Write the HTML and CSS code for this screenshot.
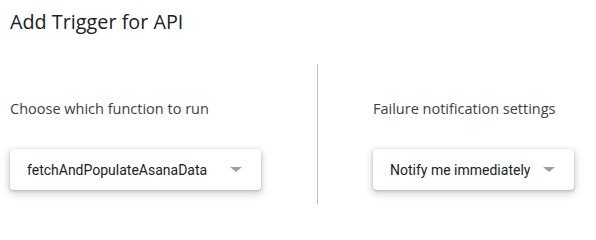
FILE: index.html
```html
<!DOCTYPE html>
<html>
<head>
<meta charset="utf-8">
<link rel="stylesheet" href="styles.css">
</head>
<body>
<div class="dialog">
  <h1 class="title">Add Trigger for API</h1>
  <div class="columns">
    <div class="col col-left">
      <div class="label">Choose which function to run</div>
      <div class="select select-fn">
        <span class="value">fetchAndPopulateAsanaData</span>
        <span class="arrow"></span>
      </div>
    </div>
    <div class="col col-right">
      <div class="label">Failure notification settings</div>
      <div class="select select-notify">
        <span class="value">Notify me immediately</span>
        <span class="arrow"></span>
      </div>
    </div>
  </div>
</div>
</body>
</html>
```
FILE: styles.css
```css
html, body {
  margin: 0;
  padding: 0;
  background: #ffffff;
}
.dialog {
  padding: 0 0 0 10px;
  font-family: "Open Sans", "Noto Sans", sans-serif;
}
.title {
  margin: 0;
  padding-top: 8px;
  font-size: 19.8px;
  line-height: 28px;
  font-weight: 400;
  color: #202124;
  height: 56px;
  box-sizing: border-box;
  height: 64px;
}
.columns {
  display: flex;
  height: 140px;
}
.col {
  display: flex;
  flex-direction: column;
  align-items: flex-start;
  padding-top: 35px;
}
.col-left {
  width: 307px;
}
.col-right {
  border-left: 1px solid #bdbdbd;
  padding-left: 55px;
}
.label {
  font-size: 14.5px;
  line-height: 20px;
  color: #3c4043;
  margin-bottom: 30px;
}
.select {
  display: flex;
  align-items: center;
  box-sizing: border-box;
  height: 41px;
  padding-left: 17px;
  padding-right: 19px;
  background: #fff;
  border-radius: 4px;
  box-shadow: 0 1px 3px 0 rgba(60, 64, 67, 0.3), 0 3px 7px 2px rgba(60, 64, 67, 0.17);
  font-family: Roboto, "Liberation Sans", sans-serif;
  font-size: 14px;
  color: #202124;
}
.select-fn {
  width: 251px;
}
.select-notify {
  width: 201px;
}
.arrow {
  margin-left: auto;
  width: 0;
  height: 0;
  border-left: 6px solid transparent;
  border-right: 6px solid transparent;
  border-top: 5px solid #9e9e9e;
}
```
